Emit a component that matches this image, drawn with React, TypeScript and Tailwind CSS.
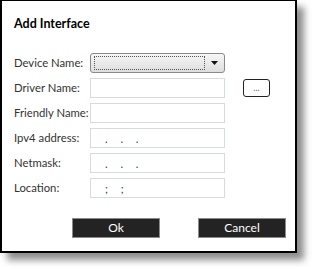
import React from 'react';

const font = { fontFamily: 'Lato, "Open Sans", sans-serif' };

const Field: React.FC<{ label: string; children?: React.ReactNode; extra?: React.ReactNode }> = ({ label, children, extra }) => (
    <div className="flex items-center h-5">
        <span className="w-[76px] text-[11.3px] text-[#333] whitespace-nowrap">{label}</span>
        {children}
        {extra}
    </div>
);

const Input: React.FC<{ text?: string }> = ({ text }) => (
    <div className="w-[135px] h-5 border border-[#d6dbe0] bg-white flex items-center pl-[14px] text-[11px] text-[#1a3a70] tracking-[5px] leading-none whitespace-pre">
        {text}
    </div>
);

export default function App() {
    return (
        <div className="w-[313px] h-[269px] bg-white" style={font}>
            <div className="w-[297px] h-[253px] bg-white border-t border-l-2 border-r-2 border-b-2 border-black shadow-[7px_7px_7px_rgba(0,0,0,0.45)] flex flex-col pl-3 pt-[14px]">
                <h1 className="text-[12.5px] font-bold text-black h-[18px] leading-[18px]">Add Interface</h1>
                <div className="flex flex-col gap-[5px] mt-5">
                    <Field label="Device Name:">
                        <div className="w-[135px] h-5 rounded-[3px] border border-[#8a8a8a] bg-gradient-to-b from-[#f6f6f6] to-[#dedede] flex items-center px-[3px] gap-[6px]">
                            <div className="flex-1 h-[14px] border border-dotted border-[#555]" />
                            <svg width="7" height="4" viewBox="0 0 7 4" className="mr-[3px]">
                                <path d="M0 0 L7 0 L3.5 4 Z" fill="#111" />
                            </svg>
                        </div>
                    </Field>
                    <Field
                        label="Driver Name:"
                        extra={
                            <div className="ml-[18px] w-[27px] h-[18px] rounded-[3px] border border-[#222] bg-white flex items-center justify-center text-[9px] text-[#6b6b9b] leading-none pb-[2px]">
                                ...
                            </div>
                        }
                    >
                        <Input />
                    </Field>
                    <Field label="Friendly Name:">
                        <Input />
                    </Field>
                    <Field label="Ipv4 address:">
                        <Input text=". . ." />
                    </Field>
                    <Field label="Netmask:">
                        <Input text=". . ." />
                    </Field>
                    <Field label="Location:">
                        <Input text="; ;" />
                    </Field>
                </div>
                <div className="flex mt-5 pl-[58px] gap-[38px]">
                    <button className="w-[88px] h-5 bg-[#232323] border border-[#8a8a8a] text-white text-[12px] leading-none">Ok</button>
                    <button className="w-[88px] h-5 bg-[#232323] border border-[#8a8a8a] text-white text-[12px] leading-none">Cancel</button>
                </div>
            </div>
        </div>
    );
}
